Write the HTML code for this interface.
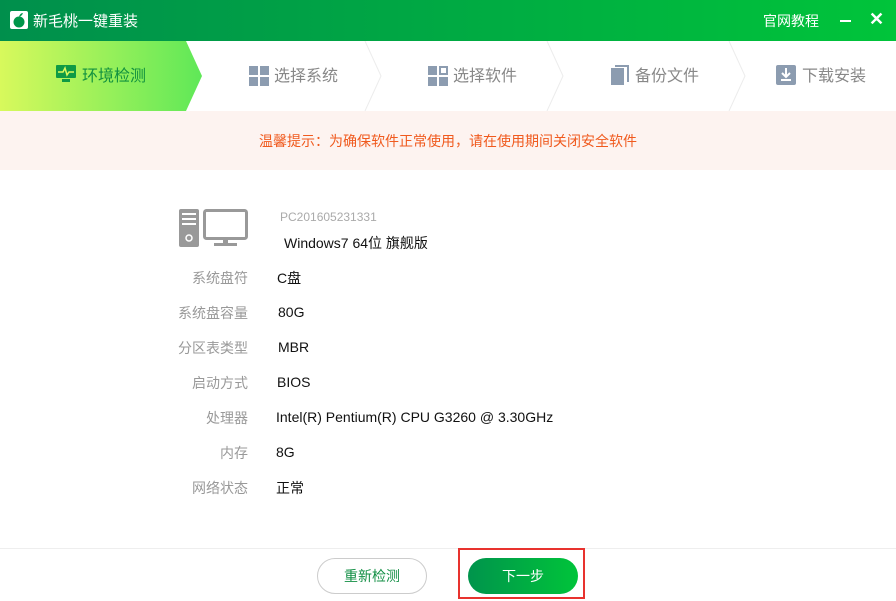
<!DOCTYPE html>
<html><head><meta charset="utf-8"><style>
*{margin:0;padding:0;box-sizing:border-box}
body{width:896px;height:601px;overflow:hidden;background:#fff;font-family:"Liberation Sans","Noto Sans CJK SC",sans-serif;position:relative}
.title{position:absolute;left:0;top:0;width:896px;height:41px;background:linear-gradient(90deg,#008f4c,#00c43a)}
.title .t{position:absolute;left:33px;top:10px;color:#fff;font-size:15px}
.title .r{position:absolute;left:763px;top:11px;color:#fff;font-size:14px}
.steps{position:absolute;left:0;top:41px;width:896px;height:70px}
.st{position:absolute;top:21px;font-size:16px;color:#888}
.notice{position:absolute;left:0;top:111px;width:896px;height:59px;background:#fdf3f0;color:#f05a1e;font-size:14px;text-align:center;line-height:60px}
.lab{position:absolute;left:120px;width:128px;text-align:right;color:#999;font-size:14px}
.val{position:absolute;color:#111;font-size:14px}
.foot{position:absolute;left:0;top:548px;width:896px;height:53px;border-top:1px solid #eee;background:#fff}
</style></head><body>
<div class="title">
<svg style="position:absolute;left:10px;top:11px" width="18" height="18" viewBox="0 0 18 18"><rect width="18" height="18" rx="2" fill="#fff"/><circle cx="9" cy="11" r="5.5" fill="#00964a"/><path d="M9 6 Q10 2 13 2 Q12 5 9 6Z" fill="#00964a"/></svg>
<div class="t">新毛桃一键重装</div>
<div class="r">官网教程</div>
<div style="position:absolute;left:840px;top:20px;width:11px;height:2px;background:#fff"></div>
<div style="position:absolute;left:869px;top:9px;color:#fff;font-size:18px;font-weight:bold">✕</div>
</div>
<div class="steps">
<svg width="896" height="70" style="position:absolute;left:0;top:0">
<defs><linearGradient id="g" x1="0" x2="1"><stop offset="0" stop-color="#d8f95c"/><stop offset="1" stop-color="#5fe858"/></linearGradient></defs>
<path d="M0 0H186L202 35L186 70H0Z" fill="url(#g)"/>
<path d="M365 0L381 35L365 70M547 0L563 35L547 70M729 0L745 35L729 70" fill="none" stroke="#ececec" stroke-width="1"/>
</svg>
<svg style="position:absolute;left:56px;top:24px" width="20" height="18" viewBox="0 0 20 18"><rect width="20" height="13" rx="1" fill="#0e9a45"/><rect x="6" y="14" width="8" height="3" fill="#0e9a45"/><path d="M2 7H7L9 3L11 10L13 7H18" stroke="#d8f95c" stroke-width="1.5" fill="none"/></svg>
<div class="st" style="left:82px;color:#12913f">环境检测</div>
<svg style="position:absolute;left:249px;top:25px" width="20" height="20"><rect width="9" height="9" fill="#8c9cb0"/><rect x="11" width="9" height="9" fill="#8c9cb0"/><rect y="11" width="9" height="9" fill="#8c9cb0"/><rect x="11" y="11" width="9" height="9" fill="#8c9cb0"/></svg>
<div class="st" style="left:274px">选择系统</div>
<svg style="position:absolute;left:428px;top:25px" width="20" height="20"><rect width="9" height="9" fill="#8c9cb0"/><rect x="12" y="1" width="7" height="7" fill="none" stroke="#8c9cb0" stroke-width="2"/><rect y="11" width="9" height="9" fill="#8c9cb0"/><rect x="11" y="11" width="9" height="9" fill="#8c9cb0"/></svg>
<div class="st" style="left:453px">选择软件</div>
<svg style="position:absolute;left:611px;top:24px" width="18" height="20"><rect x="0" y="3" width="13" height="17" fill="#8c9cb0"/><path d="M4 1H17V17" fill="none" stroke="#8c9cb0" stroke-width="2"/></svg>
<div class="st" style="left:635px">备份文件</div>
<svg style="position:absolute;left:776px;top:24px" width="20" height="20"><rect width="20" height="20" rx="2" fill="#8c9cb0"/><path d="M10 3V11M6 8L10 12L14 8M5 15H15" stroke="#fff" stroke-width="2" fill="none"/></svg>
<div class="st" style="left:802px">下载安装</div>
</div>
<div class="notice">温馨提示：为确保软件正常使用，请在使用期间关闭安全软件</div>
<svg style="position:absolute;left:179px;top:209px" width="70" height="38" viewBox="0 0 70 38"><rect x="0" y="0" width="20" height="38" rx="2" fill="#999"/><rect x="3" y="4" width="14" height="2" fill="#fff"/><rect x="3" y="9" width="14" height="2" fill="#fff"/><rect x="3" y="14" width="14" height="2" fill="#fff"/><circle cx="10" cy="29" r="3" fill="none" stroke="#fff" stroke-width="1.5"/><rect x="25.5" y="1.5" width="42" height="28" rx="2" fill="none" stroke="#999" stroke-width="3"/><rect x="44" y="30" width="5" height="5" fill="#999"/><rect x="35" y="34" width="23" height="3" fill="#999"/></svg>
<div style="position:absolute;left:280px;top:210px;color:#aaa;font-size:12px">PC201605231331</div>
<div class="val" style="left:284px;top:233px">Windows7 64位 旗舰版</div>
<div class="lab" style="top:268px">系统盘符</div><div class="val" style="left:277px;top:268px">C盘</div>
<div class="lab" style="top:303px">系统盘容量</div><div class="val" style="left:278px;top:304px">80G</div>
<div class="lab" style="top:338px">分区表类型</div><div class="val" style="left:278px;top:339px">MBR</div>
<div class="lab" style="top:373px">启动方式</div><div class="val" style="left:277px;top:374px">BIOS</div>
<div class="lab" style="top:408px">处理器</div><div class="val" style="left:276px;top:409px">Intel(R) Pentium(R) CPU G3260 @ 3.30GHz</div>
<div class="lab" style="top:443px">内存</div><div class="val" style="left:276px;top:444px">8G</div>
<div class="lab" style="top:478px">网络状态</div><div class="val" style="left:276px;top:478px">正常</div>
<div class="foot"></div>
<div style="position:absolute;left:317px;top:558px;width:110px;height:36px;border:1px solid #ccc;border-radius:18px;color:#138f45;font-size:14px;text-align:center;line-height:34px;background:#fff">重新检测</div>
<div style="position:absolute;left:458px;top:548px;width:127px;height:51px;border:2px solid #e8322e"></div>
<div style="position:absolute;left:468px;top:558px;width:110px;height:36px;border-radius:18px;background:linear-gradient(90deg,#00944c,#00c43a);color:#fff;font-size:14px;text-align:center;line-height:36px">下一步</div>
</body></html>
